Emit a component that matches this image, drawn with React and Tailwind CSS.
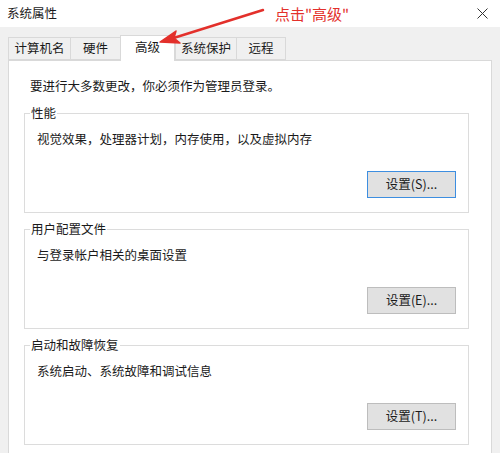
import React from 'react';

const font = { fontFamily: '"Noto Sans CJK SC", "Microsoft YaHei", sans-serif' };

function GroupBox({ title, desc, button, focused }) {
  return (
    <div className="relative border border-[#dcdcdc] h-[100px] ml-[15px] mr-[22px]">
      <span className="absolute left-[5px] top-[-10px] bg-white px-[1px] text-[12.5px] leading-[18px] text-[#1a1a1a]">
        {title}
      </span>
      <div className="pl-[12px] pt-[16px] text-[12.5px] leading-[18px] text-[#1a1a1a]">{desc}</div>
      <div className="flex justify-end pr-[12px] pt-[23px]">
        <button
          className={
            focused
              ? 'w-[89px] h-[27px] bg-[#e1e1e1] border border-[#3d8ee0] text-[12.5px] text-[#1a1a1a]'
              : 'w-[89px] h-[27px] bg-[#e1e1e1] border border-[#bdbdbd] text-[12.5px] text-[#1a1a1a]'
          }
        >
          {button}
        </button>
      </div>
    </div>
  );
}

export default function App() {
  const tabs = [
    { label: '计算机名', w: 'w-[62px]' },
    { label: '硬件', w: 'w-[50px]' },
    { label: '高级', w: 'w-[55px]', active: true },
    { label: '系统保护', w: 'w-[61px]' },
    { label: '远程', w: 'w-[50px]' },
  ];

  return (
    <div className="relative w-[500px] h-[453px] overflow-hidden bg-[#f0f0f0]" style={font}>
      {/* title bar */}
      <div className="h-[27px] bg-white flex items-center justify-between pl-[7px] pr-[11px]">
        <span className="text-[12.5px] text-[#1a1a1a]">系统属性</span>
        <svg width="11" height="11" viewBox="0 0 11 11" className="mr-[1px]">
          <path d="M0.5 0.5 L10.5 10.5 M10.5 0.5 L0.5 10.5" stroke="#333" strokeWidth="1" />
        </svg>
      </div>

      {/* tabs */}
      <div className="flex items-end pl-[8px] pt-[8px] relative z-10">
        {tabs.map((t) =>
          t.active ? (
            <div
              key={t.label}
              className={`${t.w} h-[26px] bg-white border border-b-0 border-[#d9d9d9] mb-[-1px] flex items-center justify-center text-[12.5px] text-[#1a1a1a] pb-[2px]`}
            >
              {t.label}
            </div>
          ) : (
            <div
              key={t.label}
              className={`${t.w} h-[23px] bg-[#f0f0f0] border border-r-0 border-[#d9d9d9] flex items-center justify-center text-[12.5px] text-[#1a1a1a] last:border-r`}
            >
              {t.label}
            </div>
          )
        )}
      </div>

      {/* content panel */}
      <div className="mx-[8px] h-[400px] bg-white border border-[#d9d9d9]">
        <p className="pl-[21px] pt-[16px] text-[12.5px] leading-[18px] text-[#1a1a1a]">
          要进行大多数更改，你必须作为管理员登录。
        </p>
        <div className="flex flex-col gap-[16px] pt-[18px]">
          <GroupBox title="性能" desc="视觉效果，处理器计划，内存使用，以及虚拟内存" button="设置(S)..." focused />
          <GroupBox title="用户配置文件" desc="与登录帐户相关的桌面设置" button="设置(E)..." />
          <GroupBox title="启动和故障恢复" desc="系统启动、系统故障和调试信息" button="设置(T)..." />
        </div>
      </div>

      {/* red annotation */}
      <svg className="absolute left-0 top-0 z-20" width="300" height="60" viewBox="0 0 300 60">
        <line x1="263" y1="10" x2="172" y2="38.5" stroke="#e3302b" strokeWidth="2.5" strokeLinecap="round" />
        <path d="M160 42 L176 31 L174 38 L180 43 Z" fill="#e3302b" stroke="#e3302b" strokeWidth="1.5" strokeLinejoin="round" />
      </svg>
      <span className="absolute left-[275px] top-[3px] z-20 text-[15px] leading-[22px] text-[#e3302b]">
        点击"高级"
      </span>
    </div>
  );
}
